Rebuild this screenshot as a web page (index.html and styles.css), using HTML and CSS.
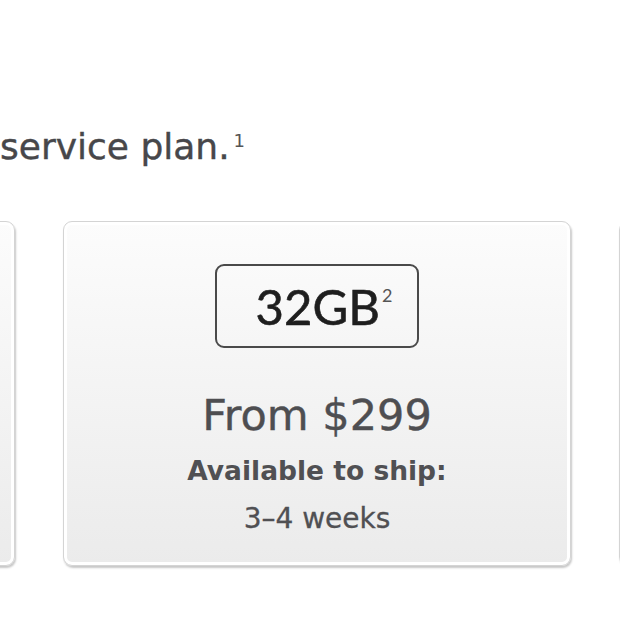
FILE: index.html
```html
<!DOCTYPE html>
<html>
<head>
<meta charset="utf-8">
<link rel="stylesheet" href="styles.css">
</head>
<body>
<div class="page">
  <h2 class="lead">service plan.<sup class="fn">1</sup></h2>
  <div class="cards">
    <div class="card"></div>
    <div class="card">
      <div class="capacity">32GB<sup class="cap-fn">2</sup></div>
      <div class="price">From $299</div>
      <div class="ship-label">Available to ship:</div>
      <div class="ship-time">3–4 weeks</div>
    </div>
    <div class="card"></div>
  </div>
</div>
</body>
</html>
```
FILE: styles.css
```css
html, body {
  margin: 0;
  padding: 0;
  background: #ffffff;
}
.page {
  width: 620px;
  height: 620px;
  overflow: hidden;
  font-family: "DejaVu Sans", "Liberation Sans", sans-serif;
}
.lead {
  margin: 0;
  padding-top: 125px;
  font-size: 36px;
  line-height: 44px;
  font-weight: normal;
  color: #47474a;
  white-space: nowrap;
  -webkit-text-stroke: 0.4px #47474a;
}
.fn {
  font-size: 18px;
  vertical-align: top;
  position: relative;
  top: -6px;
  margin-left: 4px;
  color: #555;
  -webkit-text-stroke: 0;
}
.cards {
  display: flex;
  gap: 48px;
  margin-left: -493px;
  margin-top: 52px;
}
.card {
  flex: 0 0 auto;
  width: 508px;
  height: 345px;
  border: 1px solid #d4d4d4;
  border-radius: 9px;
  background: linear-gradient(#fcfcfc, #ebebeb);
  box-shadow: inset 0 0 0 3px #ffffff, 1px 2px 2px rgba(0,0,0,0.22);
  display: flex;
  flex-direction: column;
  align-items: center;
  box-sizing: border-box;
  padding-top: 42px;
}
.capacity {
  width: 204px;
  height: 84px;
  box-sizing: border-box;
  border: 2.5px solid #4a4a4a;
  border-radius: 9px;
  display: flex;
  align-items: center;
  justify-content: center;
  padding-left: 14px;
  font-family: "Lato", "Liberation Sans", sans-serif;
  font-size: 49px;
  color: #1e1e1e;
  -webkit-text-stroke: 0.6px #1e1e1e;
}
.cap-fn {
  font-size: 18px;
  color: #555;
  align-self: flex-start;
  margin-top: 18px;
  margin-left: 2px;
  vertical-align: baseline;
  -webkit-text-stroke: 0;
}
.price {
  margin-top: 42px;
  font-size: 43px;
  line-height: 50px;
  color: #4e4e51;
  -webkit-text-stroke: 0.4px #4e4e51;
}
.ship-label {
  margin-top: 14px;
  font-size: 26.5px;
  line-height: 34px;
  font-weight: bold;
  color: #505053;
}
.ship-time {
  margin-top: 14px;
  font-size: 28px;
  line-height: 34px;
  color: #505053;
  -webkit-text-stroke: 0.3px #505053;
}
```
